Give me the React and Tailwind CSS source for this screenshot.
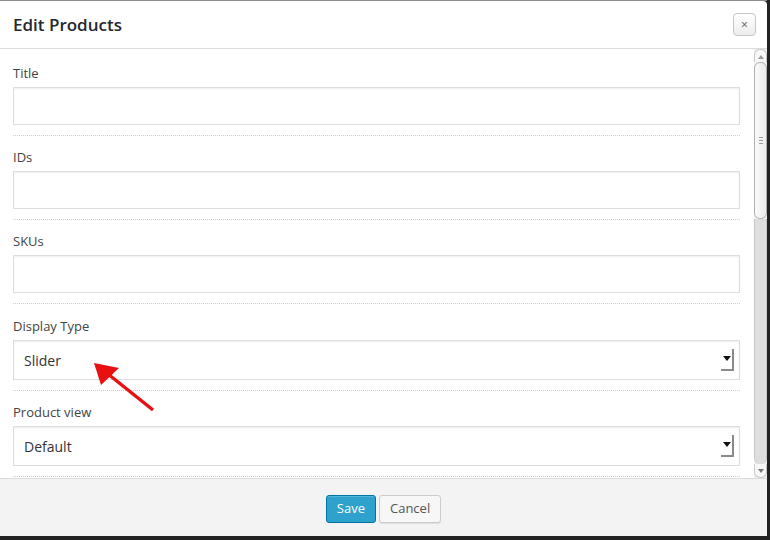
import React from "react";

const font = { fontFamily: '"Open Sans", "Noto Sans", sans-serif' };

function SelectArrow() {
  return (
    <div className="w-[13px] h-[22px] border-r-2 border-b-2 border-[#8a8a8a] flex justify-center pt-[7px]">
      <svg width="8" height="5" viewBox="0 0 8 5">
        <polygon points="0,0 8,0 4,5" fill="#111" />
      </svg>
    </div>
  );
}

function TextRow({ label, first }) {
  return (
    <div className={`${first ? "" : "pt-[12px]"} pb-[10px] border-b border-dotted border-[#cfcfcf]`}>
      <div className="h-[18px] leading-[18px] text-[13px] font-medium text-[#444]">{label}</div>
      <div className="mt-[5px] h-[38px] border border-[#dddddd] bg-white shadow-[inset_0_1px_2px_rgba(0,0,0,0.07)]" />
    </div>
  );
}

function SelectRow({ label, value, pt }) {
  return (
    <div className={`${pt} pb-[10px] border-b border-dotted border-[#cfcfcf]`}>
      <div className="h-[18px] leading-[18px] text-[13px] font-medium text-[#444]">{label}</div>
      <div className="mt-[5px] h-[40px] border border-[#dddddd] bg-white shadow-[inset_0_1px_2px_rgba(0,0,0,0.07)] flex items-center pl-[10px] pr-[5px]">
        <span className="flex-1 text-[14px] text-[#333]">{value}</span>
        <SelectArrow />
      </div>
    </div>
  );
}

function Scrollbar() {
  return (
    <div className="w-[13px] h-full flex flex-col bg-[#f0f0f0]">
      <div className="h-[13px] border border-b-0 border-[#c8c8c8] rounded-t-[6px] bg-[#f7f7f7] flex justify-center items-center pt-[2px]">
        <svg width="6" height="4" viewBox="0 0 6 4"><polygon points="0,4 6,4 3,0" fill="#9a9a9a" /></svg>
      </div>
      <div className="h-[157px] border border-[#b0b0b0] rounded-[6px] bg-gradient-to-r from-[#fafafa] to-[#ececec] flex flex-col items-center justify-center gap-[2px]">
        <div className="w-[4px] h-px bg-[#999]" />
        <div className="w-[4px] h-px bg-[#999]" />
        <div className="w-[4px] h-px bg-[#999]" />
      </div>
      <div className="flex-1 border-x border-[#c8c8c8] bg-[#dedede] rounded-b-[6px]" />
      <div className="h-[14px] border border-t-0 border-[#c8c8c8] rounded-b-[6px] bg-[#f7f7f7] flex justify-center items-center">
        <svg width="6" height="4" viewBox="0 0 6 4"><polygon points="0,0 6,0 3,4" fill="#777" /></svg>
      </div>
    </div>
  );
}

export default function App() {
  return (
    <div className="w-[770px] h-[540px] bg-[#222222] flex flex-col overflow-hidden relative" style={font}>
      <div className="h-px bg-[#8c8c8c] w-[767px] shrink-0" />
      <div className="flex shrink-0">
        <div className="w-[767px] h-[535px] bg-white flex flex-col rounded-tr-[4px] overflow-hidden">
          <div className="h-[48px] shrink-0 border-b border-[#dddddd] flex items-center pl-[13px] pr-[11px]">
            <h1 className="flex-1 text-[17px] font-semibold text-[#23282d]">Edit Products</h1>
            <button className="w-[23px] h-[23px] rounded-[4px] border border-[#c6c6c6] bg-gradient-to-b from-white to-[#ededed] flex items-center justify-center text-[12px] leading-none text-[#555]">
              ×
            </button>
          </div>
          <div className="h-[429px] shrink-0 flex">
            <div className="flex-1 pl-[13px] pr-[14px] pt-[15px] overflow-hidden">
              <TextRow label="Title" first />
              <TextRow label="IDs" />
              <TextRow label="SKUs" />
              <SelectRow label="Display Type" value="Slider" pt="pt-[13px]" />
              <SelectRow label="Product view" value="Default" pt="pt-[12px]" />
            </div>
            <Scrollbar />
          </div>
          <div className="flex-1 border-t border-[#dcdcdc] bg-[#f3f3f3] flex items-center justify-center gap-[3px] pt-[3px]">
            <button className="h-[28px] px-[10px] rounded-[3px] bg-[#2ea2cc] border border-[#0074a2] text-white text-[13px] shadow-[inset_0_1px_0_rgba(120,200,230,0.5)]">
              Save
            </button>
            <button className="h-[28px] px-[10px] rounded-[3px] bg-[#f7f7f7] border border-[#cccccc] text-[#555] text-[13px] shadow-[0_1px_0_rgba(0,0,0,0.08)]">
              Cancel
            </button>
          </div>
        </div>
      </div>
      <svg className="absolute left-0 top-0 pointer-events-none" width="770" height="540">
        <line x1="153" y1="410" x2="108" y2="374" stroke="#e81010" strokeWidth="3.5" />
        <polygon points="94,363 119,368 101,385" fill="#e81010" />
      </svg>
    </div>
  );
}
